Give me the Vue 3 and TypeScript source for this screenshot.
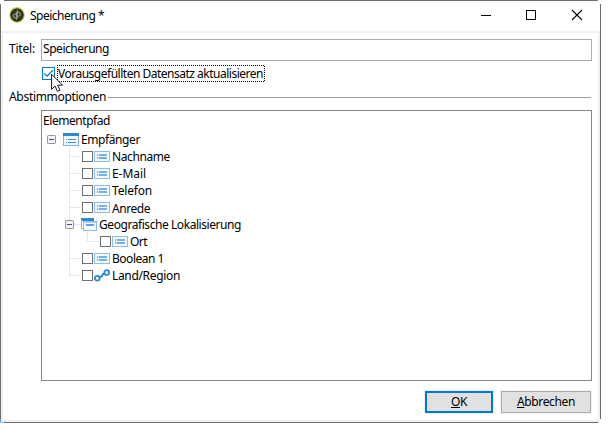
<script setup lang="ts">
import { ref } from 'vue'

type Kind = 'root' | 'folder' | 'field' | 'nested' | 'link'

interface Row {
  label: string
  kind: Kind
  last?: boolean
  low?: boolean
  width: number
}

const title = ref('Speicherung')
const rows: Row[] = [
  { label: 'Empfänger', kind: 'root', width: 59 },
  { label: 'Nachname', kind: 'field', width: 58 },
  { label: 'E-Mail', kind: 'field', width: 34 },
  { label: 'Telefon', kind: 'field', width: 40 },
  { label: 'Anrede', kind: 'field', low: true, width: 38 },
  { label: 'Geografische Lokalisierung', kind: 'folder', width: 142 },
  { label: 'Ort', kind: 'nested', width: 17 },
  { label: 'Boolean 1', kind: 'field', width: 52 },
  { label: 'Land/Region', kind: 'link', last: true, width: 68 },
]

const vFit = {
  mounted(el: HTMLElement, binding: { value: number }) {
    const natural = el.getBoundingClientRect().width
    const count = (el.textContent ?? '').length
    el.style.letterSpacing = `${(binding.value - natural) / count}px`
  },
}
</script>

<template>
  <div class="window">
    <header class="titlebar">
      <svg class="logo" width="16" height="16" viewBox="0 0 16 16">
        <circle cx="8" cy="8" r="7" fill="#34352a" stroke="#b3c430" stroke-width="1.3" />
        <circle cx="8" cy="8" r="6" fill="none" stroke="#20211a" stroke-width="1" />
        <path d="M8.4 2.7V10.9H6A1.8 1.8 0 0 1 6 7.1H7M7.4 13V5.3H9.5A1.9 1.9 0 0 1 9.5 9.2" fill="none" stroke="#a3a58c" stroke-width="1" />
      </svg>
      <span class="caption"><span v-fit="74">Speicherung *</span></span>
      <svg class="controls" width="102" height="12" viewBox="0 0 102 12" fill="none" stroke="#000">
        <path d="M0 6.5H10" shape-rendering="crispEdges" />
        <rect x="45.5" y="1.5" width="9" height="9" shape-rendering="crispEdges" />
        <path d="M91 1L101 11M101 1L91 11" stroke-width="1.1" />
      </svg>
    </header>

    <main class="body">
      <div class="title-row">
        <label class="title-label"><span v-fit="26">Titel:</span></label>
        <div class="input"><span v-fit="66">{{ title }}</span></div>
      </div>

      <div class="option">
        <svg class="tick" width="13" height="13" viewBox="0 0 13 13">
          <rect x=".5" y=".5" width="12" height="12" fill="#fff" stroke="#0078d7" />
          <path d="M2.3 6.4L5 9.1L10.8 3.2" fill="none" stroke="#0078d7" stroke-width="1.3" />
        </svg>
        <div class="focus">
          <span v-fit="205">Vorausgefüllten Datensatz aktualisieren</span>
          <svg class="dots" width="208" height="17" viewBox="0 0 208 17">
            <rect x=".5" y=".5" width="207" height="16" fill="none" stroke="#000" stroke-dasharray="1 1" stroke-dashoffset=".5" shape-rendering="crispEdges" />
          </svg>
        </div>
        <svg class="cursor" width="13" height="20" viewBox="0 0 13 20">
          <path d="M.6 1.2V16.4L4.1 13.1L6.4 18.4L9 17.3L6.7 12.2H11.5Z" fill="#fff" stroke="#161622" stroke-width="1" />
        </svg>
      </div>

      <div class="group"><span v-fit="97">Abstimmoptionen</span><i class="rule"></i></div>

      <section class="tree">
        <div class="head"><span v-fit="67">Elementpfad</span></div>
        <div v-for="row in rows" :key="row.label" class="row" :class="[row.kind, { last: row.last }]">
          <i v-if="row.kind !== 'root'" class="guide"></i>
          <i v-if="row.kind === 'nested'" class="guide branch"></i>
          <svg v-if="row.kind === 'root' || row.kind === 'folder'" class="toggle" width="9" height="9" viewBox="0 0 9 9">
            <rect x=".5" y=".5" width="8" height="8" rx=".7" fill="#f2f2f2" stroke="#969696" />
            <path d="M2 4.5H7" stroke="#3c50a0" shape-rendering="crispEdges" />
          </svg>
          <i v-else class="check"></i>

          <svg v-if="row.kind === 'root'" class="icon" width="16" height="13" viewBox="0 0 16 13">
            <rect x=".5" y=".5" width="15" height="12" fill="#f3f9ff" stroke="#7fb5e8" />
            <path d="M0 1.5H16" stroke="#2f86d3" stroke-width="3" />
            <path d="M3 6.5H4M3 9.5H4M5 6.5H13M5 9.5H13" stroke="#3c8fda" />
          </svg>
          <svg v-else-if="row.kind === 'folder'" class="icon" width="16" height="13" viewBox="0 0 16 13">
            <path d="M0 1.5H13" stroke="#2f86d3" stroke-width="3" />
            <path d="M.5 2V10.5H2" fill="none" stroke="#7fb5e8" />
            <rect x="2.5" y="3.5" width="13" height="9" fill="#f3f9ff" stroke="#8bbdec" />
            <path d="M3 4.5H15" stroke="#b9d9f6" />
            <path d="M5 7H13" stroke="#3c8fda" stroke-width="1.6" />
          </svg>
          <svg v-else-if="row.kind === 'link'" class="icon" width="16" height="13" viewBox="0 0 16 13" fill="none" stroke="#2f86d3">
            <path d="M5 8Q8 8 8.3 6.3T11 4.8" stroke-width="2" />
            <circle cx="3.2" cy="9.2" r="2.4" stroke-width="1.8" />
            <circle cx="12.7" cy="3.6" r="2.4" stroke-width="1.8" />
          </svg>
          <svg v-else class="icon" width="16" height="11" viewBox="0 0 16 11">
            <rect x=".5" y=".5" width="15" height="10" fill="#f3f9ff" stroke="#8bbdec" />
            <path d="M3 4H4.2M3 7H4.2M5 4H13M5 7H13" stroke="#4c9ae0" stroke-width="1.4" />
          </svg>
          <span v-fit="row.width" class="label" :class="{ low: row.low }">{{ row.label }}</span>
        </div>
      </section>

      <footer class="actions">
        <button class="btn primary"><span v-fit="16"><u>O</u>K</span></button>
        <button class="btn"><span v-fit="58"><u>A</u>bbrechen</span></button>
      </footer>
    </main>
  </div>
</template>

<style>
body {
  background: #fff;
}
</style>

<style scoped>
.window {
  box-sizing: border-box;
  width: 601px;
  height: 423px;
  padding: 1px;
  background:
    linear-gradient(#9ccbf0, #9ccbf0) 0 100% / 4px 1px no-repeat,
    linear-gradient(#9ccbf0, #9ccbf0) 598px 100% / 1px 1px no-repeat,
    linear-gradient(#5f9bc8, #5f9bc8) 0 419px / 1px 3px no-repeat,
    linear-gradient(#5f9bc8, #5f9bc8) 597px 0 / 1px 1px no-repeat,
    linear-gradient(#6e6e6e, #6e6e6e) 4px 0 / 593px 1px no-repeat,
    linear-gradient(#6e6e6e, #6e6e6e) 4px 100% / 594px 1px no-repeat,
    linear-gradient(#6e6e6e, #6e6e6e) 0 4px / 1px 415px no-repeat,
    linear-gradient(#6e6e6e, #6e6e6e) 100% 4px / 1px 415px no-repeat,
    #fff;
  color: #000;
  font: 12px/17px "Noto Sans", "Open Sans", sans-serif;
  white-space: nowrap;
}
span {
  display: inline-block;
}
.titlebar {
  display: flex;
  height: 30px;
}
.logo {
  margin: 6px 0 0 8px;
}
.caption {
  margin: 6px 0 0 5px;
}
.controls {
  margin: 8px 17px 0 auto;
}
.body {
  box-sizing: border-box;
  height: 391px;
  border: 2px solid #f0f0f0;
  padding: 6px 6px 0 6px;
}
.title-row {
  display: flex;
  height: 22px;
}
.title-label {
  width: 32px;
  padding-top: 1px;
  box-sizing: border-box;
}
.input {
  box-sizing: border-box;
  width: 551px;
  height: 22px;
  border: 1px solid #abadb3;
  padding: 0 0 0 1px;
}
.option {
  position: relative;
  display: flex;
  height: 17px;
  margin: 4px 0 0 33px;
}
.tick {
  margin-top: 2px;
}
.focus {
  position: relative;
  width: 208px;
  margin-left: 2px;
  padding-left: 1px;
  box-sizing: border-box;
}
.dots {
  position: absolute;
  left: 0;
  top: 0;
}
.cursor {
  position: absolute;
  left: 9px;
  top: 8px;
}
.group {
  display: flex;
  height: 17px;
  margin-top: 6px;
}
.rule {
  width: 483px;
  height: 1px;
  margin: 9px 0 0 2px;
  background: #a0a0a0;
}
.tree {
  box-sizing: border-box;
  width: 551px;
  height: 271px;
  margin: 5px 0 0 32px;
  border: 1px solid #828790;
}
.head {
  height: 20px;
  padding: 1px 0 0 1px;
  box-sizing: border-box;
}
.row {
  display: flex;
  align-items: center;
  height: 17px;
  padding-left: 27px;
}
.root {
  padding-left: 5px;
}
.guide {
  flex: none;
  align-self: stretch;
  width: 13px;
  background: linear-gradient(#e7e7e7, #e7e7e7) 0 0 / 1px 100% no-repeat, linear-gradient(#e7e7e7, #e7e7e7) 0 8px / 12px 1px no-repeat;
}
.last .guide {
  background-size: 1px 9px, 12px 1px;
}
.nested .guide {
  width: 18px;
  background-size: 1px 100%, 0 0;
}
.nested .branch {
  width: 13px;
  background-size: 1px 9px, 12px 1px;
}
.toggle {
  flex: none;
  margin-right: 7px;
}
.folder .toggle {
  margin: 0 7px 0 -17px;
}
.check {
  box-sizing: border-box;
  flex: none;
  width: 11px;
  height: 11px;
  margin-right: 1px;
  border: 1px solid #707070;
  background: #fff;
}
.icon {
  flex: none;
  margin-right: 2px;
}
.low {
  padding-top: 2px;
}
.actions {
  display: flex;
  justify-content: flex-end;
  gap: 8px;
  margin-top: 10px;
  padding-right: 1px;
}
.btn {
  box-sizing: border-box;
  width: 90px;
  height: 22px;
  padding: 0 0 1px;
  border: 1px solid #adadad;
  outline: 1px solid #f0f0f0;
  background: #e1e1e1;
  color: #000;
  font: inherit;
}
.primary {
  width: 68px;
  border: 2px solid #0078d7;
}
</style>
